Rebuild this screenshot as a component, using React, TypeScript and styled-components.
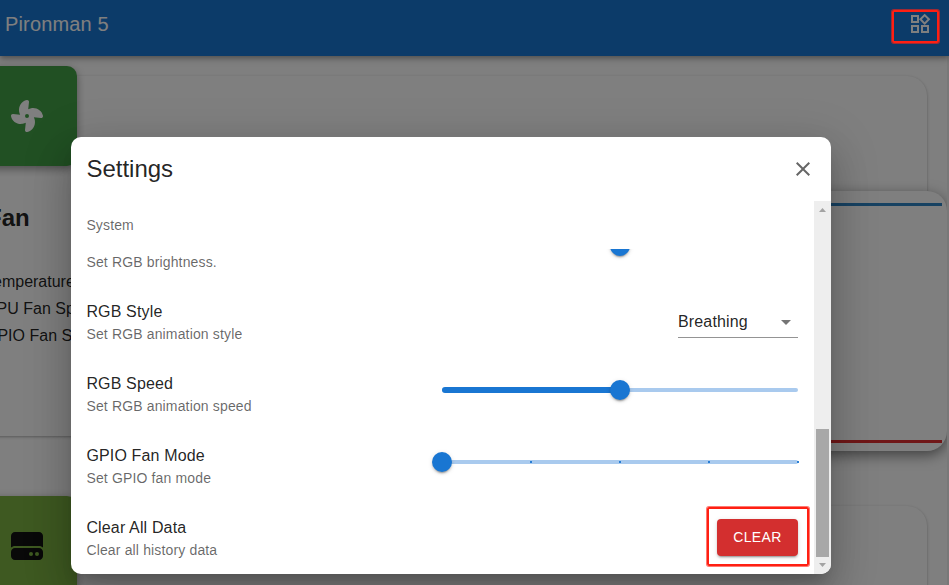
import React from "react";
import styled, { createGlobalStyle } from "styled-components";
import { FaFan, FaHardDrive } from "react-icons/fa6";
import { MdOutlineWidgets, MdClose, MdArrowDropDown } from "react-icons/md";

const GlobalStyle = createGlobalStyle`
  * { box-sizing: border-box; }
  body {
    margin: 0;
    overflow: hidden;
    font-family: "Liberation Sans", Arial, sans-serif;
    color: rgba(0, 0, 0, 0.87);
  }
`;

const Screen = styled.div`
  position: relative;
  width: 949px;
  height: 585px;
  overflow: hidden;
  background: #fefefe;
`;

const AppBar = styled.header`
  position: relative;
  z-index: 1;
  display: flex;
  align-items: flex-start;
  justify-content: space-between;
  height: 56px;
  padding: 12px 17px 0 5px;
  background: #1976d2;
  color: #fff;
  box-shadow: 0 2px 4px -1px rgba(0, 0, 0, 0.2), 0 4px 5px rgba(0, 0, 0, 0.14), 0 1px 10px rgba(0, 0, 0, 0.12);
`;

const AppTitle = styled.span`
  font-size: 20px;
  line-height: 24px;
  letter-spacing: 0.15px;
`;

const Dashboard = styled.main`
  display: flex;
  flex-direction: column;
  gap: 70px;
  padding: 20px 22px 0 0;
  margin-left: -23px;
`;

const Panel = styled.section`
  position: relative;
  display: flex;
  height: 360px;
  padding-top: 115px;
  border-radius: 0 20px 20px 0;
  background: #fff;
  box-shadow: 0 1px 3px rgba(0, 0, 0, 0.3);
`;

const IconTile = styled.div<{ $color: string; $ink: string }>`
  position: absolute;
  top: -10px;
  left: 0;
  display: flex;
  align-items: center;
  justify-content: center;
  width: 100px;
  height: 100px;
  border-radius: 10px;
  background: ${(p) => p.$color};
  color: ${(p) => p.$ink};
  box-shadow: 0 3px 8px rgba(0, 0, 0, 0.4);
`;

const Readings = styled.div`
  flex: none;
  width: 200px;
  padding: 12px 0 0 8px;
`;

const PanelTitle = styled.h2`
  margin: 0 0 35px 2px;
  font-size: 24px;
  line-height: 30px;
`;

const Reading = styled.p`
  margin: 0;
  font-size: 16px;
  line-height: 27px;
  white-space: nowrap;
`;

const Chart = styled.div`
  display: flex;
  flex: 1;
  flex-direction: column;
  justify-content: space-between;
  height: 260px;
  margin-right: -20px;
  padding: 12px 5px 8px 0;
  border-radius: 20px;
  background: #fff;
  box-shadow: 0 4px 14px rgba(0, 0, 0, 0.5);
`;

const Series = styled.div<{ $color: string }>`
  height: 3px;
  background: ${(p) => p.$color};
`;

const PageEdge = styled.div`
  position: absolute;
  top: 56px;
  right: 0;
  bottom: 0;
  width: 2px;
  background: #f0f0f0;
`;

const Backdrop = styled.div`
  position: absolute;
  inset: 0;
  z-index: 2;
  padding: 137px 0 0 71px;
  background: rgba(0, 0, 0, 0.5);
`;

const Dialog = styled.div`
  display: flex;
  flex-direction: column;
  width: 760px;
  height: 437px;
  overflow: hidden;
  border-radius: 10px;
  background: #fff;
`;

const DialogShadow = styled.div`
  width: 760px;
  border-radius: 10px;
  box-shadow: 0 11px 15px -7px rgba(0, 0, 0, 0.2), 0 24px 38px 3px rgba(0, 0, 0, 0.14), 0 9px 46px 8px rgba(0, 0, 0, 0.12);
`;

const DialogHeader = styled.div`
  display: flex;
  flex: none;
  align-items: center;
  justify-content: space-between;
  height: 64px;
  padding: 0 16px 0 15.4px;
`;

const DialogTitle = styled.h1`
  margin: 0;
  font-size: 24px;
  font-weight: 400;
  line-height: 32px;
`;

const CloseButton = styled.button`
  display: flex;
  padding: 0;
  border: 0;
  background: none;
  color: rgba(0, 0, 0, 0.6);
`;

const DialogBody = styled.div`
  display: flex;
  flex: 1;
  min-height: 0;
`;

const Settings = styled.div`
  flex: 1;
  padding: 0 16px 0 15.4px;
`;

const GroupHeading = styled.div`
  height: 48px;
  font-size: 14px;
  line-height: 48px;
  letter-spacing: 0.14px;
  color: rgba(0, 0, 0, 0.6);
`;

const Clipped = styled.div`
  display: flex;
  align-items: flex-start;
  justify-content: space-between;
  height: 37px;
  overflow: hidden;
`;

const Row = styled.div`
  display: flex;
  align-items: center;
  justify-content: space-between;
  height: 72px;
`;

const Label = styled.div`
  font-size: 16px;
  line-height: 24px;
  letter-spacing: 0.15px;
`;

const Hint = styled.div`
  padding-top: 3px;
  font-size: 14px;
  line-height: 20px;
  letter-spacing: 0.15px;
  color: rgba(0, 0, 0, 0.6);
`;

const LabelBlock = styled.div`
  ${Hint} { padding-top: 0; }
`;

const Select = styled.div`
  display: flex;
  align-items: center;
  justify-content: space-between;
  width: 120px;
  height: 32px;
  border-bottom: 1px solid rgba(0, 0, 0, 0.42);
  font-size: 16px;
  letter-spacing: 0.15px;
  svg { color: rgba(0, 0, 0, 0.54); }
`;

const Rail = styled.div`
  position: relative;
  display: flex;
  align-items: center;
  width: 356px;
  height: 4px;
  margin-bottom: 8px;
  border-radius: 2px;
  background: #a9caee;
`;

const Track = styled.div`
  width: 50%;
  height: 6px;
  border-radius: 3px;
  background: #1976d2;
`;

const Mark = styled.span<{ $at: number }>`
  position: absolute;
  top: 1px;
  left: calc(${(p) => p.$at}% - 1px);
  width: 2px;
  height: 2px;
  background: #1976d2;
  opacity: 0.9;
`;

const Thumb = styled.span<{ $at: number }>`
  position: absolute;
  top: -8px;
  left: calc(${(p) => p.$at}% - 10px);
  width: 20px;
  height: 20px;
  border-radius: 50%;
  background: #1976d2;
  box-shadow: 0 3px 1px -2px rgba(0, 0, 0, 0.2), 0 2px 2px rgba(0, 0, 0, 0.14), 0 1px 5px rgba(0, 0, 0, 0.12);
`;

const ClippedThumb = styled.div`
  width: 20px;
  height: 20px;
  margin: -13px 168px 0 0;
  border-radius: 50%;
  background: #1976d2;
  box-shadow: 0 3px 1px -2px rgba(0, 0, 0, 0.2), 0 2px 2px rgba(0, 0, 0, 0.14), 0 1px 5px rgba(0, 0, 0, 0.12);
`;

const ClearButton = styled.button`
  width: 81px;
  height: 37px;
  margin-bottom: 2px;
  padding: 0;
  border: 0;
  border-radius: 4px;
  background: #d32f2f;
  color: #fff;
  font: 500 14px "Liberation Sans", Arial, sans-serif;
  letter-spacing: 0.4px;
  box-shadow: 0 3px 1px -2px rgba(0, 0, 0, 0.2), 0 2px 2px rgba(0, 0, 0, 0.14), 0 1px 5px rgba(0, 0, 0, 0.12);
`;

const Scrollbar = styled.div`
  display: flex;
  flex-direction: column;
  align-items: center;
  justify-content: space-between;
  width: 17px;
  background: #eee;
`;

const ScrollArrow = styled.svg`
  display: block;
  width: 17px;
  height: 17px;
  fill: #a3a3a3;
`;

const ScrollThumb = styled.div`
  width: 13px;
  height: 128px;
  margin-top: auto;
  background: #a8a8a8;
`;

const Highlight = styled.div<{ $x: number; $y: number; $w: number; $h: number }>`
  position: absolute;
  z-index: 3;
  left: ${(p) => p.$x}px;
  top: ${(p) => p.$y}px;
  width: ${(p) => p.$w}px;
  height: ${(p) => p.$h}px;
  border: 2px solid #ff1f12;
  border-radius: 2px;
  box-shadow: 0 0 0 1px rgba(255, 31, 18, 0.6);
`;

function SettingText({ label, hint }: { label: string; hint: string }) {
  return (
    <LabelBlock>
      <Label>{label}</Label>
      <Hint>{hint}</Hint>
    </LabelBlock>
  );
}

export default function App() {
  return (
    <Screen>
      <GlobalStyle />
      <AppBar>
        <AppTitle>Pironman 5</AppTitle>
        <MdOutlineWidgets size={24} />
      </AppBar>
      <Dashboard>
        <Panel>
          <IconTile $color="#43a047" $ink="#fff"><FaFan size={32} /></IconTile>
          <Readings>
            <PanelTitle>Fan</PanelTitle>
            <Reading>Temperature</Reading>
            <Reading>CPU Fan Speed</Reading>
            <Reading>GPIO Fan State</Reading>
          </Readings>
          <Chart>
            <Series $color="#2f84c4" />
            <Series $color="#e02f30" />
          </Chart>
        </Panel>
        <Panel>
          <IconTile $color="#7cb342" $ink="#121212"><FaHardDrive size={32} /></IconTile>
        </Panel>
      </Dashboard>
      <PageEdge />
      <Backdrop>
        <DialogShadow>
          <Dialog role="dialog">
            <DialogHeader>
              <DialogTitle>Settings</DialogTitle>
              <CloseButton aria-label="Close"><MdClose size={24} /></CloseButton>
            </DialogHeader>
            <DialogBody>
              <Settings>
                <GroupHeading>System</GroupHeading>
                <Clipped>
                  <Hint>Set RGB brightness.</Hint>
                  <ClippedThumb />
                </Clipped>
                <Row>
                  <SettingText label="RGB Style" hint="Set RGB animation style" />
                  <Select>Breathing<MdArrowDropDown size={24} /></Select>
                </Row>
                <Row>
                  <SettingText label="RGB Speed" hint="Set RGB animation speed" />
                  <Rail><Track /><Thumb $at={50} /></Rail>
                </Row>
                <Row>
                  <SettingText label="GPIO Fan Mode" hint="Set GPIO fan mode" />
                  <Rail>
                    {[25, 50, 75, 100].map((at) => <Mark key={at} $at={at} />)}
                    <Thumb $at={0} />
                  </Rail>
                </Row>
                <Row>
                  <SettingText label="Clear All Data" hint="Clear all history data" />
                  <ClearButton>CLEAR</ClearButton>
                </Row>
              </Settings>
              <Scrollbar>
                <ScrollArrow viewBox="0 0 17 17"><path d="M5 11h7L8.500 7z" /></ScrollArrow>
                <ScrollThumb />
                <ScrollArrow viewBox="0 0 17 17"><path d="M5 6h7L8.500 10z" /></ScrollArrow>
              </Scrollbar>
            </DialogBody>
          </Dialog>
        </DialogShadow>
      </Backdrop>
      <Highlight $x={892} $y={10} $w={47} $h={33} />
      <Highlight $x={707} $y={507} $w={102} $h={59} />
    </Screen>
  );
}
